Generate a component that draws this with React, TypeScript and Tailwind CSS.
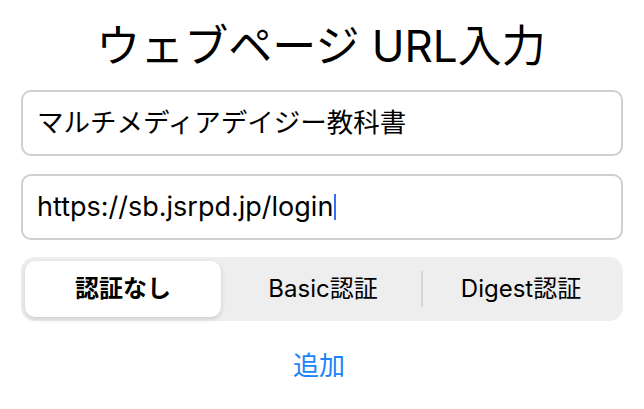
import React from "react";

export default function App() {
  const font = { fontFamily: 'Inter, "Noto Sans CJK JP", sans-serif' };
  return (
    <div className="w-[644px] h-[409px] bg-white overflow-hidden text-black" style={font}>
      <div className="h-[90px] flex items-center justify-center text-[44px] leading-none pt-[2px] pr-[2px]">
        ウェブページ URL入力
      </div>
      <div className="px-[21px] flex flex-col">
        <div className="h-[66px] border-2 border-[#cfcfcf] rounded-[10px] flex items-center px-[14px] text-[26.5px]">
          マルチメディアデイジー教科書
        </div>
        <div className="h-[66px] mt-[18px] border-2 border-[#cfcfcf] rounded-[10px] flex items-center px-[14px] text-[27px]">
          <span>https://sb.jsrpd.jp/login</span>
          <span className="w-[2px] h-[26px] bg-[#3b6ef5] ml-[1px]" />
        </div>
        <div className="h-[64px] mt-[17px] bg-[#eeeeee] rounded-[14px] p-[4px] flex items-stretch text-[24px]">
          <div className="flex-1 bg-white rounded-[10px] shadow-[0_2px_5px_rgba(0,0,0,0.15)] flex items-center justify-center font-bold mr-[4px]">
            認証なし
          </div>
          <div className="flex-1 flex items-center justify-center">Basic認証</div>
          <div className="w-[2px] my-[10px] bg-[#d6d6d6]" />
          <div className="flex-1 flex items-center justify-center">Digest認証</div>
        </div>
        <div className="h-[88px] flex items-center justify-center text-[26px] text-[#1a84f8] pr-[6px]">
          追加
        </div>
      </div>
    </div>
  );
}
